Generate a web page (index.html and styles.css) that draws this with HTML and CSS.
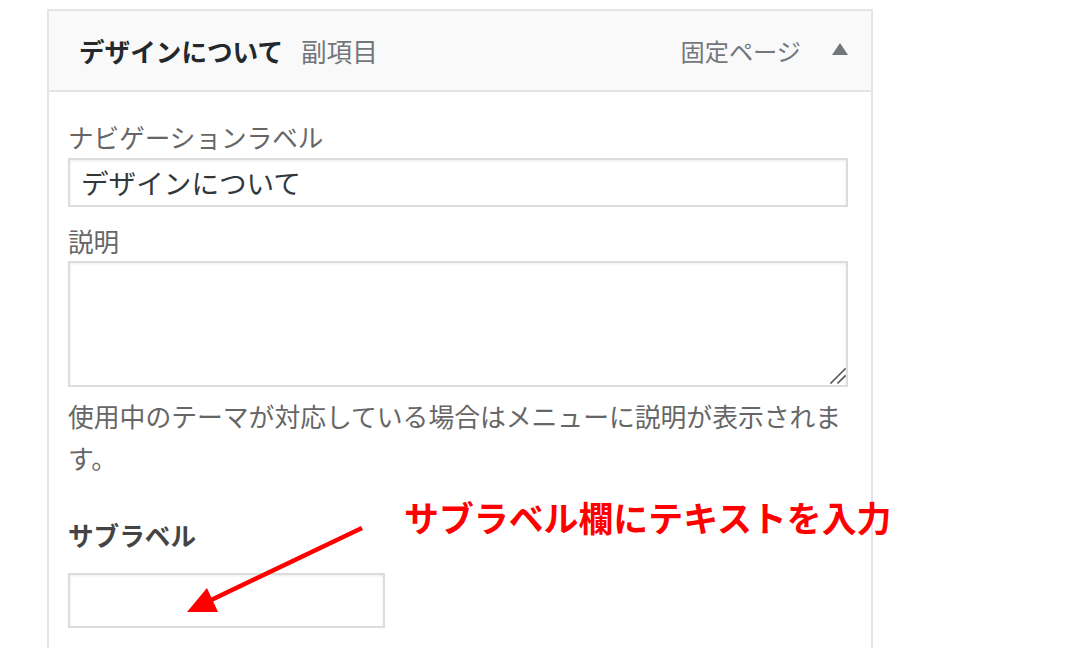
FILE: index.html
```html
<!DOCTYPE html>
<html lang="ja">
<head>
<meta charset="utf-8">
<link rel="stylesheet" href="styles.css">
</head>
<body>
<div class="panel">
  <div class="panel-head">
    <div class="title"><span class="title-main">デザインについて</span><span class="title-sub">副項目</span></div>
    <div class="meta"><span class="type">固定ページ</span><span class="toggle"></span></div>
  </div>
  <div class="panel-body">
    <div class="label">ナビゲーションラベル</div>
    <div class="input">デザインについて</div>
    <div class="label label-gap">説明</div>
    <div class="textarea">
      <svg class="grip" width="16" height="16" viewBox="0 0 16 16"><path d="M1 15 L15 1 M8 15 L15 8" stroke="#555" stroke-width="1.6" stroke-linecap="square" fill="none"/></svg>
    </div>
    <p class="desc">使用中のテーマが対応している場合はメニューに説明が表示されます。</p>
    <div class="sublabel">サブラベル</div>
    <div class="input small"></div>
  </div>
</div>
<div class="note">サブラベル欄にテキストを入力</div>
<svg class="arrow" width="1084" height="648" viewBox="0 0 1084 648">
  <line x1="362" y1="528" x2="207" y2="602" stroke="#ff0000" stroke-width="4.5"/>
  <polygon points="187,612 207,588 218,612" fill="#ff0000"/>
</svg>
</body>
</html>
```
FILE: styles.css
```css
html, body {
  margin: 0;
  padding: 0;
  background: #fff;
  font-family: "Noto Sans CJK JP", "Noto Sans", sans-serif;
}
body {
  position: relative;
  width: 1084px;
  height: 648px;
  overflow: hidden;
}
.panel {
  margin: 9px 0 0 47px;
  width: 822px;
  border: 2px solid #e2e4e7;
  border-bottom: none;
  height: 637px;
  overflow: hidden;
}
.panel-head {
  height: 79px;
  background: #f9f9f9;
  border-bottom: 2px solid #e2e4e7;
  display: flex;
  align-items: center;
  justify-content: space-between;
  padding: 0 23px 0 30px;
}
.title {
  display: flex;
  align-items: center;
  font-size: 25.6px;
  line-height: 30px;
}
.title-main {
  font-weight: 700;
  color: #23282d;
}
.title-sub {
  margin-left: 18px;
  color: #72777c;
}
.meta {
  display: flex;
  align-items: center;
}
.type {
  font-size: 24.2px;
  line-height: 30px;
  color: #72777c;
}
.toggle {
  margin-left: 31px;
  width: 0;
  height: 0;
  border-left: 8px solid transparent;
  border-right: 8px solid transparent;
  border-bottom: 12px solid #72777c;
  margin-top: -3px;
}
.panel-body {
  padding: 30px 23px 0 19px;
}
.label {
  font-size: 25.6px;
  line-height: 30px;
  color: #666;
}
.label-gap {
  margin-top: 19px;
}
.input {
  margin-top: 6px;
  height: 45px;
  border: 2px solid #dcdcdc;
  box-shadow: inset 0 1px 3px rgba(0,0,0,0.08);
  font-size: 27.6px;
  line-height: 44px;
  color: #32373c;
  padding-left: 11px;
  box-sizing: content-box;
  width: 765px;
}
.textarea {
  position: relative;
  margin-top: 5px;
  height: 122px;
  width: 776px;
  border: 2px solid #dcdcdc;
  box-shadow: inset 0 1px 3px rgba(0,0,0,0.08);
}
.grip {
  position: absolute;
  right: 0;
  bottom: 1px;
}
.desc {
  margin: 8px 0 0 0;
  font-size: 25.8px;
  line-height: 42px;
  color: #666;
  width: 785px;
}
.sublabel {
  margin-top: 41px;
  font-size: 25.6px;
  line-height: 30px;
  font-weight: 700;
  color: #444;
}
.input.small {
  margin-top: 23px;
  width: 302px;
  height: 51px;
  padding-left: 11px;
}
.note {
  position: absolute;
  left: 404px;
  top: 496px;
  font-size: 34.9px;
  line-height: 42px;
  font-weight: 700;
  color: #ff0000;
  white-space: nowrap;
}
.arrow {
  position: absolute;
  left: 0;
  top: 0;
}
```
